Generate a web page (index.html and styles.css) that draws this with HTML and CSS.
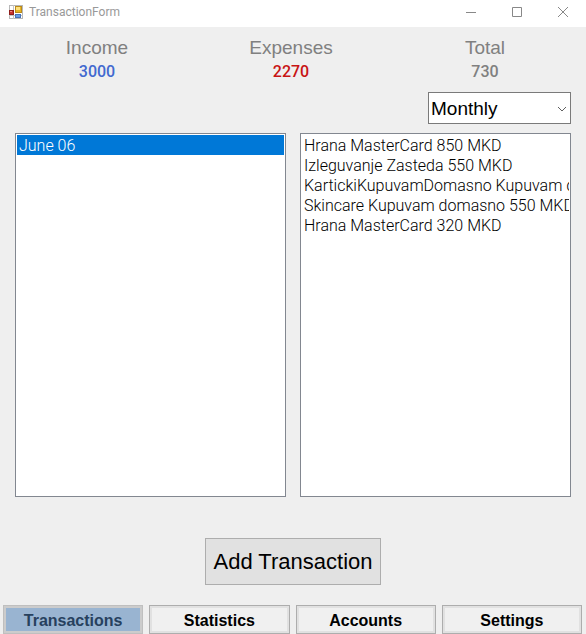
FILE: index.html
```html
<!DOCTYPE html>
<html lang="en">
<head>
<meta charset="utf-8">
<meta name="viewport" content="width=device-width, initial-scale=1">
<title>TransactionForm</title>
<link rel="stylesheet" href="styles.css">
</head>
<body>
<header class="titlebar">
  <svg class="app-icon" viewBox="0 0 14 14" aria-hidden="true">
    <rect x="0.5" y="0.5" width="13" height="13" fill="#fff" stroke="#b8b8b8"/>
    <path d="M4.5 0v14M0 10.5h14" stroke="#c4c4c4"/>
    <rect x="6.5" y="1.5" width="6" height="6" fill="#e6b422" stroke="#b98a1c"/>
    <rect x="7" y="2" width="4" height="3" fill="#ffe17a"/>
    <rect x="0.5" y="5.5" width="4" height="4" fill="#c8322c" stroke="#8e1e1c"/>
    <rect x="1" y="6" width="2" height="1" fill="#f08a80"/>
    <rect x="6.5" y="9.5" width="5" height="3" fill="#6a9ee6" stroke="#4673b8"/>
  </svg>
  <h1 class="title">TransactionForm</h1>
  <div class="window-controls">
    <button class="window-button" type="button" aria-label="Minimize"><svg viewBox="0 0 12 12"><path d="M1 6.5h10"/></svg></button>
    <button class="window-button" type="button" aria-label="Maximize"><svg viewBox="0 0 12 12"><path d="M1.5 1.5h9v9h-9z"/></svg></button>
    <button class="window-button" type="button" aria-label="Close"><svg viewBox="0 0 12 12"><path d="M1 1l10 10M11 1L1 11"/></svg></button>
  </div>
</header>
<main class="content">
  <dl class="summary">
    <div class="stat"><dt>Income</dt><dd class="income">3000</dd></div>
    <div class="stat"><dt>Expenses</dt><dd class="expenses">2270</dd></div>
    <div class="stat"><dt>Total</dt><dd>730</dd></div>
  </dl>
  <div class="filter">
    <div class="period">
      <select class="period-select" aria-label="Period">
        <option>Monthly</option>
      </select>
      <svg class="chevron" viewBox="0 0 10 6" aria-hidden="true"><path d="M1 1l4 4 4-4"/></svg>
    </div>
  </div>
  <div class="lists">
    <ul class="list periods" role="listbox" aria-label="Periods">
      <li class="selected" role="option" aria-selected="true">June 06</li>
    </ul>
    <ul class="list entries" role="listbox" aria-label="Transactions">
      <li role="option">Hrana MasterCard 850 MKD</li>
      <li role="option">Izleguvanje Zasteda 550 MKD</li>
      <li role="option">KartickiKupuvamDomasno Kupuvam d</li>
      <li role="option">Skincare Kupuvam domasno 550 MKD</li>
      <li role="option">Hrana MasterCard 320 MKD</li>
    </ul>
  </div>
  <button class="add" type="button">Add Transaction</button>
</main>
<nav class="tabs" aria-label="Sections">
  <button class="tab active" type="button" aria-current="page">Transactions</button>
  <button class="tab" type="button">Statistics</button>
  <button class="tab" type="button">Accounts</button>
  <button class="tab" type="button">Settings</button>
</nav>
</body>
</html>
```
FILE: styles.css
```css
* { box-sizing: border-box; }

body {
  margin: 0;
  min-height: 100vh;
  display: flex;
  flex-direction: column;
  background: #efefef;
  color: #000;
  font-family: "Liberation Sans", Arial, sans-serif;
  font-size: 16px;
}

button, select { font-family: inherit; color: inherit; border-radius: 0; }

.titlebar {
  display: flex;
  align-items: center;
  height: 27px;
  padding: 0 0 4px 9px;
  background: #fff;
}
.app-icon { width: 14px; height: 14px; }
.title {
  margin: 0 auto 0 6px;
  font: 400 12px/16px Roboto, sans-serif;
  color: #999;
}
.window-controls { display: flex; }
.window-button {
  width: 46px;
  height: 22px;
  padding: 0;
  border: 0;
  background: none;
  display: grid;
  place-items: center;
}
.window-button svg { width: 12px; height: 12px; fill: none; stroke: #888; }

.content {
  flex: 1;
  display: flex;
  flex-direction: column;
  padding: 9px 15px 20px;
}

.summary {
  display: grid;
  grid-template-columns: repeat(3, 1fr);
  margin: 0 -11px 0 -15px;
  text-align: center;
  color: #808080;
}
.stat dt { font-size: 19px; line-height: 24px; }
.stat dd {
  margin: 0;
  font-family: Roboto, sans-serif;
  font-size: 16px;
  font-weight: 500;
  line-height: 24px;
}
.stat .income { color: #4169d0; }
.stat .expenses { color: #c81414; }

.filter { display: flex; justify-content: flex-end; margin: 8px 0 9px; }
.period { position: relative; width: 143px; }
.period-select {
  appearance: none;
  display: block;
  width: 100%;
  height: 32px;
  padding: 0 20px 0 2px;
  border: 1px solid #7a7a7a;
  background: #fff;
  font-size: 19px;
}
.chevron {
  position: absolute;
  right: 4px;
  top: 14px;
  width: 10px;
  height: 6px;
  fill: none;
  stroke: #606060;
  pointer-events: none;
}

.lists {
  flex: 1;
  display: grid;
  grid-template-columns: minmax(0, 1fr) minmax(0, 1fr);
  gap: 14px;
}
.list {
  margin: 0;
  padding: 1px;
  list-style: none;
  border: 1px solid #828790;
  background: #fff;
  font-family: Roboto, sans-serif;
  font-weight: 300;
  line-height: 18px;
  overflow: hidden;
  white-space: nowrap;
}
.list li { padding: 2px 0 0 2px; overflow: hidden; }
.selected { background: #0078d7; color: #fff; }

.add {
  align-self: center;
  margin-top: 41px;
  height: 47px;
  padding: 0 8px;
  border: 1px solid #adadad;
  background: #e1e1e1;
  font-size: 22px;
}

.tabs {
  display: grid;
  grid-template-columns: repeat(4, 1fr);
  gap: 6px;
  padding: 0 4px 0 3px;
}
.tab {
  height: 29px;
  padding: 2px 0 0;
  border: 1px solid #adadad;
  box-shadow: inset 0 0 0 2px #e1e1e1;
  background: #f0f0f0;
  font-size: 16px;
  font-weight: 700;
}
.tab.active {
  border-color: #bfbfbf;
  box-shadow: inset 0 0 0 2px #ccc;
  background: #99b4d1;
  color: #27415e;
}
```
